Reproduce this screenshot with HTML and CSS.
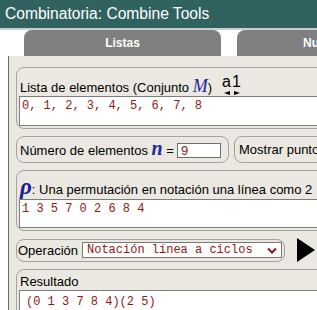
FILE: index.html
```html
<!DOCTYPE html>
<html>
<head>
<meta charset="utf-8">
<link rel="stylesheet" href="styles.css">
</head>
<body>
<div class="header">Combinatoria: Combine Tools</div>
<div class="tabbar">
  <div class="tab">Listas</div>
  <div class="tab tab2">Numeros</div>
</div>
<div class="panel">
  <div class="box box-list">
    <div class="label label-list">
      <span>Lista de elementos (Conjunto <i class="sym-m">M</i>)</span>
      <span class="a1">
        <span class="a1-text">a1</span>
        <span class="a1-arrows"><span class="tri-l"></span><span class="tri-r"></span></span>
      </span>
    </div>
    <div class="ta">0, 1, 2, 3, 4, 5, 6, 7, 8</div>
  </div>

  <div class="row">
    <div class="box box-n">
      <span>Número de elementos <b class="sym-n">n</b> =</span>
      <span class="input">9</span>
    </div>
    <div class="box box-show">Mostrar puntos</div>
  </div>

  <div class="box box-perm">
    <div class="label label-perm"><b class="sym-rho">ρ</b>: Una permutación en notación una línea como 2</div>
    <div class="ta ta-perm">1 3 5 7 0 2 6 8 4</div>
  </div>

  <div class="row row-op">
    <div class="box box-op">
      <span class="op-label">Operación</span>
      <div class="select">
        <span>Notación línea a ciclos</span>
        <svg class="chev" width="10" height="7" viewBox="0 0 10 7"><polyline points="1,1.5 5,5.5 9,1.5" fill="none" stroke="#8e1414" stroke-width="2"/></svg>
      </div>
    </div>
    <svg class="play" width="18" height="24" viewBox="0 0 18 24"><polygon points="0,0 18,12 0,24" fill="#000"/></svg>
  </div>

  <div class="box box-res">
    <div class="label label-res">Resultado</div>
    <div class="ta ta-res">(0 1 3 7 8 4)(2 5)</div>
  </div>
</div>
</body>
</html>
```

FILE: styles.css
```css
html, body {
  margin: 0;
  padding: 0;
  overflow: hidden;
  background: #fff;
}
body {
  width: 700px;
  font-family: "Liberation Sans", Arial, sans-serif;
  font-size: 13px;
  color: #000;
}
.header {
  height: 28px;
  line-height: 28px;
  background: #30625f;
  color: #fff;
  font-size: 15.6px;
  padding-left: 5px;
}
.tabbar {
  display: flex;
  gap: 16px;
  padding-left: 24px;
  border-top: 2px solid #cfcfcf;
}
.tab {
  width: 197px;
  height: 26px;
  line-height: 26px;
  background: #808080;
  color: #fff;
  font-weight: bold;
  font-size: 12px;
  text-align: center;
  border-radius: 8px 8px 0 0;
}
.tab2 {
  width: 184px;
}
.panel {
  margin-left: 8px;
  border-left: 1px solid #6a6a6a;
  background: #eae8e0;
  padding: 11px 0 20px 7px;
  display: flex;
  flex-direction: column;
  gap: 7px;
}
.box {
  border: 1px solid #a3a3a3;
  border-radius: 8px;
  box-sizing: border-box;
}
.box-list {
  width: 500px;
  padding: 12px 0 2px 2px;
}
.label {
  line-height: 16px;
  padding-left: 1px;
}
.label-list {
  display: flex;
  align-items: flex-end;
  height: 16px;
}
.sym-m {
  font-family: "Liberation Serif", "Times New Roman", serif;
  font-size: 18px;
  color: #24249a;
  line-height: 10px;
}
.a1 {
  display: flex;
  flex-direction: column;
  align-items: flex-start;
  margin-left: 10px;
  margin-bottom: 1px;
}
.a1-text {
  font-size: 16px;
  line-height: 13px;
  letter-spacing: 1px;
}
.a1-arrows {
  display: flex;
  gap: 4px;
  margin-top: 3px;
  padding-left: 2px;
}
.tri-l {
  width: 0;
  height: 0;
  border-top: 2.5px solid transparent;
  border-bottom: 2.5px solid transparent;
  border-right: 6px solid #000;
}
.tri-r {
  width: 0;
  height: 0;
  border-top: 2.5px solid transparent;
  border-bottom: 2.5px solid transparent;
  border-left: 6px solid #000;
}
.ta {
  background: #fff;
  border: 1px solid #7c7c7c;
  box-sizing: border-box;
  height: 30px;
  padding: 2px 2px;
  font-family: "Liberation Mono", "Courier New", monospace;
  font-size: 12px;
  line-height: 14px;
  color: #951616;
}
.row {
  display: flex;
  gap: 5px;
  align-items: center;
}
.box-n {
  width: 213px;
  height: 27px;
  display: flex;
  align-items: center;
  justify-content: space-between;
  padding: 1px 7px 0 3px;
}
.sym-n {
  font-family: "Liberation Serif", "Times New Roman", serif;
  font-style: italic;
  font-size: 20px;
  color: #1f2a9c;
  line-height: 10px;
}
.input {
  width: 44px;
  height: 15px;
  box-sizing: border-box;
  background: #fff;
  border: 1px solid #6f6f6f;
  line-height: 13px;
  padding-left: 3px;
  color: #951616;
  font-size: 13px;
}
.box-show {
  width: 200px;
  height: 27px;
  padding: 5px 0 0 4px;
  line-height: 16px;
}
.box-perm {
  width: 500px;
  padding: 10px 0 2px 2px;
}
.label-perm {
  line-height: 18px;
}
.sym-rho {
  font-family: "Liberation Serif", "Times New Roman", serif;
  font-style: italic;
  font-size: 23px;
  color: #17218f;
  line-height: 10px;
}
.ta-perm {
  height: 29px;
}
.row-op {
  gap: 12px;
}
.box-op {
  width: 269px;
  height: 23px;
  display: flex;
  align-items: center;
  gap: 4px;
  padding: 0 2px 0 1px;
}
.select {
  flex: 1;
  height: 16px;
  box-sizing: border-box;
  background: #fff;
  border: 1px solid #777;
  display: flex;
  align-items: center;
  justify-content: space-between;
  padding: 0 4px 0 4px;
  font-family: "Liberation Mono", "Courier New", monospace;
  font-size: 12px;
  color: #951616;
}
.play {
  display: block;
}
.box-res {
  width: 500px;
  height: 80px;
  padding: 4px 0 0 2px;
}
.label-res {
  line-height: 16px;
}
.ta-res {
  height: 60px;
  padding: 4px 6px;
}
```
